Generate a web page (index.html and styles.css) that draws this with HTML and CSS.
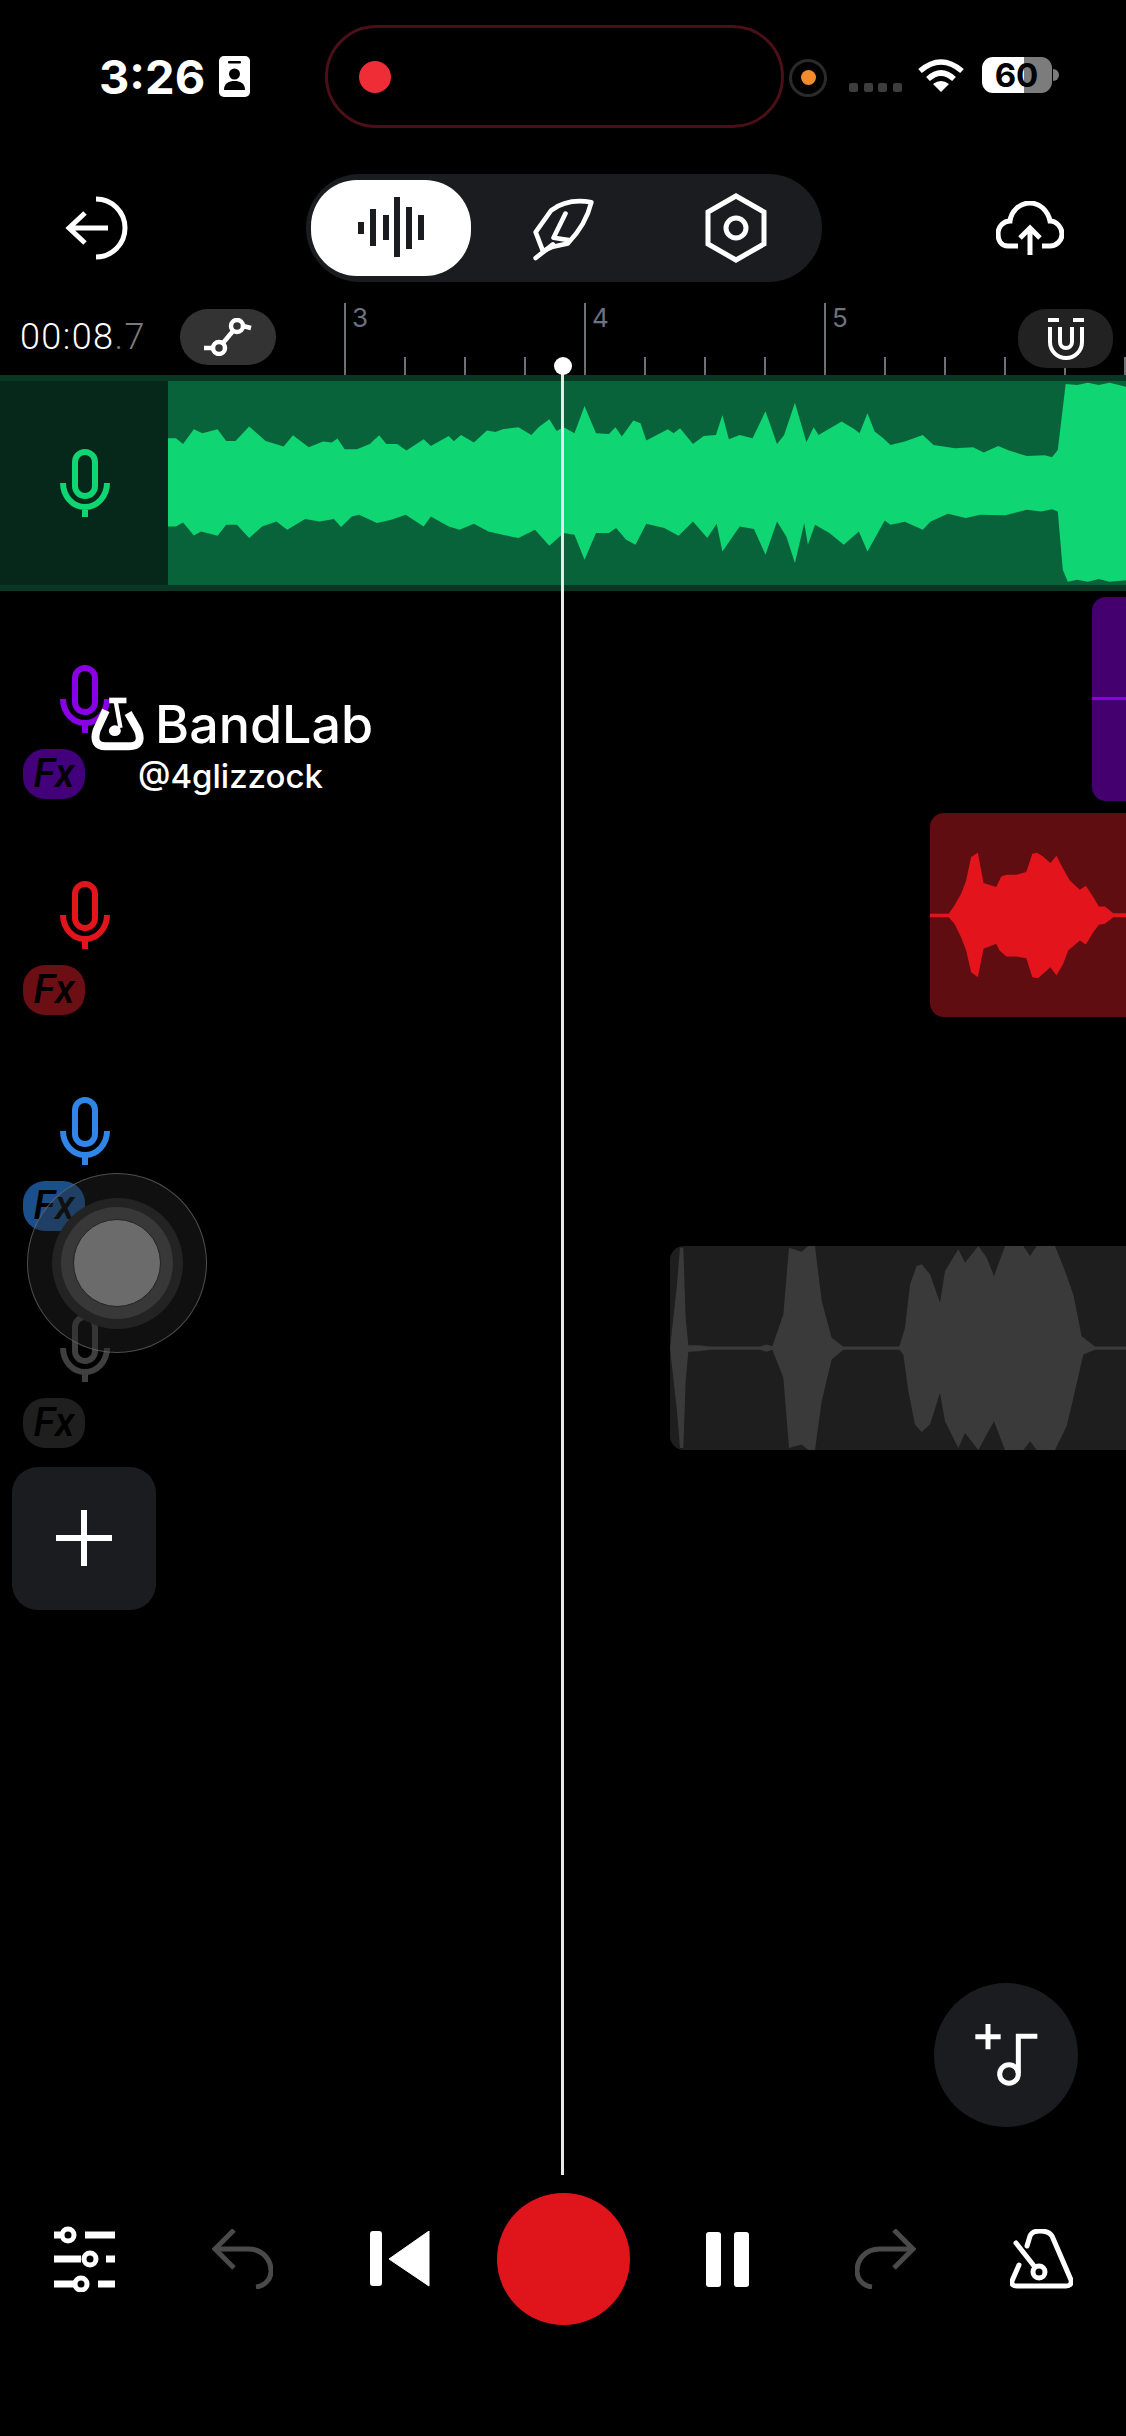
FILE: index.html
```html
<!DOCTYPE html>
<html lang="en">
<head>
  <meta charset="utf-8">
  <title>BandLab Studio</title>
  <link rel="stylesheet" href="styles.css">
</head>
<body>
  <!-- ios status bar -->
  <div class="status">
    <span class="clock">3:26</span>
    <svg class="badge" width="31" height="41" viewBox="0 0 31 41">
      <rect width="31" height="41" rx="5" fill="#fff"/>
      <rect x="9" y="5" width="13" height="2.5" rx="1" fill="#000"/>
      <circle cx="15.5" cy="18" r="5.5" fill="#000"/>
      <path d="M5 34c0-7 5-9 10.5-9S26 27 26 34z" fill="#000"/>
    </svg>
    <div class="island"><span class="rec-dot"></span></div>
    <div class="cam"><span></span></div>
    <div class="signal"><i></i><i></i><i></i><i></i></div>
    <svg class="wifi" width="48" height="34" viewBox="0 0 48 34" fill="none" stroke="#fff" stroke-width="5.5">
      <path d="M3 13Q24-5 45 13"/>
      <path d="M11 21Q24 9 37 21"/>
      <path d="M24 34L16 26Q24 20 32 26Z" fill="#fff" stroke="none"/>
    </svg>
    <div class="battery">60</div>
    <span class="nub"></span>
  </div>

  <!-- top nav -->
  <div class="nav">
    <svg class="back" width="64" height="66" viewBox="0 0 64 66" fill="none" stroke="#fff" stroke-width="5">
      <path d="M32 4A29 29 0 0 1 32 62"/>
      <path d="M4 33H44M21 18L5 33L21 48"/>
    </svg>
    <div class="modes">
      <div class="mode-on">
        <svg width="66" height="62" viewBox="0 0 66 62" fill="#1a1c20">
          <rect x="0" y="25" width="6" height="12"/>
          <rect x="12" y="12" width="6" height="37"/>
          <rect x="25" y="18" width="6" height="25"/>
          <rect x="36" y="0" width="6" height="60"/>
          <rect x="48" y="10" width="6" height="42"/>
          <rect x="60" y="18" width="6" height="25"/>
        </svg>
      </div>
      <svg class="feather" width="61" height="65" viewBox="1090 40 184 194" fill="none" stroke="#fff" stroke-width="14" stroke-linejoin="round" stroke-linecap="round">
        <path d="M1098 148L1145 82Q1195 45 1266 58Q1250 125 1195 182L1150 192L1120 205Z"/>
        <path d="M1188 92L1152 165L1198 172M1098 226L1150 185"/>
      </svg>
      <svg class="hex" width="62" height="70" viewBox="0 0 62 70" fill="none" stroke="#fff" stroke-width="5">
        <path d="M31 3L59 19V51L31 67L3 51V19Z"/>
        <circle cx="31" cy="35" r="10"/>
      </svg>
    </div>
    <svg class="cloud" width="68" height="54" viewBox="0 0 68 54" fill="none" stroke="#fff" stroke-width="5">
      <path d="M22 45H12C5 45 2 39 2 33C2 25 8 20 14 20C15 10 24 2 34 2C44 2 52 10 54 20C61 20 66 27 66 33C66 40 60 45 54 45H46"/>
      <path d="M34 54V28M24 37L34 27L44 37"/>
    </svg>
  </div>

  <!-- time + ruler -->
  <div class="timebar">
    <div class="ruler">
      <div class="bar">3</div>
      <div class="bar">4</div>
      <div class="bar">5</div>
    </div>
    <div class="timecode">00:08<span>.7</span></div>
    <div class="pill-btn auto-btn">
      <svg width="48" height="38" viewBox="0 0 48 38" fill="none" stroke="#fff" stroke-width="4.5">
        <circle cx="15" cy="30" r="6"/>
        <circle cx="33" cy="8" r="6"/>
        <path d="M0 30H9M19 25L29 13M39 8L47 10"/>
      </svg>
    </div>
    <div class="pill-btn magnet-btn">
      <svg width="38" height="42" viewBox="0 0 38 42" fill="none" stroke="#fff" stroke-width="4">
        <path d="M1 2H12M26 2H37"/>
        <path d="M3 9V24A16 16 0 0 0 35 24V9"/>
        <path d="M13 9V24A6 6 0 0 0 25 24V9"/>
      </svg>
    </div>
  </div>

  <!-- tracks -->
  <div class="tracks">
    <div class="track armed green">
      <div class="head">
        <svg class="mic" viewBox="0 0 50 68" fill="none" stroke="currentColor" stroke-width="6"><rect x="15" y="3" width="20" height="44" rx="10"/><path d="M3 34A22 24 0 0 0 47 34M25 58V68"/></svg>
      </div>
      <div class="lane">
        <div class="clip clip-green">
          <svg viewBox="234 33 1334 612" preserveAspectRatio="none">
            <path fill="#0fd673" d="M234 205L245 205 255 222 270 178 282 190 303 178 315 213 328 213 347 170 370 213 395 230 408 196 430 232 450 215 462 218 470 206 480 238 497 238 515 222 528 196 538 222 553 222 566 242 590 208 600 228 625 198 632 214 642 195 660 218 678 182 690 186 700 178 722 172 740 195 750 172 765 148 775 183 785 172 800 190 814 108 830 190 848 192 857 172 866 200 882 152 892 160 900 212 930 178 938 190 947 175 965 222 980 198 997 195 1006 135 1015 208 1030 195 1048 205 1066 124 1082 222 1092 195 1107 98 1123 217 1133 172 1140 195 1172 155 1190 178 1197 190 1208 130 1218 185 1230 205 1240 225 1260 215 1285 195 1300 225 1330 235 1355 232 1370 248 1390 228 1405 242 1430 258 1455 256 1465 262 1473 240 1484 42 1500 45 1515 38 1530 45 1545 38 1568 50 1568 632 1545 636 1530 628 1515 636 1500 630 1487 636 1480 600 1473 425 1465 418 1450 425 1430 420 1400 436 1365 435 1345 445 1320 432 1296 455 1285 480 1260 456 1240 465 1232 452 1208 545 1196 485 1175 525 1155 490 1135 465 1125 525 1120 460 1107 580 1095 500 1082 455 1066 555 1050 478 1030 470 1006 545 998 462 985 505 965 455 945 498 925 475 900 462 885 525 872 510 858 475 848 490 830 490 814 570 800 495 785 490 765 528 745 480 722 505 700 495 680 485 660 462 640 480 625 470 600 440 590 470 565 435 545 450 525 460 500 435 490 440 475 472 465 448 445 455 425 448 400 480 385 455 365 470 347 505 330 465 315 465 303 498 280 485 270 497 255 458 245 470 234 470Z"/>
          </svg>
        </div>
      </div>
    </div>

    <div class="track purple">
      <div class="head">
        <svg class="mic" viewBox="0 0 50 68" fill="none" stroke="currentColor" stroke-width="6"><rect x="15" y="3" width="20" height="44" rx="10"/><path d="M3 34A22 24 0 0 0 47 34M25 58V68"/></svg>
        <div class="fx">Fx</div>
      </div>
      <div class="lane">
        <div class="clip clip-purple"><span class="flat"></span></div>
      </div>
    </div>

    <div class="track red">
      <div class="head">
        <svg class="mic" viewBox="0 0 50 68" fill="none" stroke="currentColor" stroke-width="6"><rect x="15" y="3" width="20" height="44" rx="10"/><path d="M3 34A22 24 0 0 0 47 34M25 58V68"/></svg>
        <div class="fx">Fx</div>
      </div>
      <div class="lane">
        <div class="clip clip-red">
          <svg viewBox="92 68 586 612" preserveAspectRatio="none">
            <path fill="#e3141b" d="M92 370L148 370 165 345 185 310 200 270 215 200 235 187 245 240 252 278 290 290 305 258 320 253 350 253 380 245 398 190 412 187 430 198 452 218 470 196 490 235 510 270 540 298 558 286 580 320 597 348 615 348 640 368 678 368 678 380 640 380 615 400 597 403 580 425 558 462 540 450 505 480 490 520 470 555 452 530 415 563 398 560 380 503 350 498 320 498 300 480 290 460 252 475 235 560 215 545 200 480 185 440 165 400 148 380 92 380Z"/>
          </svg>
        </div>
      </div>
    </div>

    <div class="track blue">
      <div class="head">
        <svg class="mic" viewBox="0 0 50 68" fill="none" stroke="currentColor" stroke-width="6"><rect x="15" y="3" width="20" height="44" rx="10"/><path d="M3 34A22 24 0 0 0 47 34M25 58V68"/></svg>
        <div class="fx">Fx</div>
      </div>
      <div class="lane"></div>
    </div>

    <div class="track grey">
      <div class="head">
        <svg class="mic" viewBox="0 0 50 68" fill="none" stroke="currentColor" stroke-width="6"><rect x="15" y="3" width="20" height="44" rx="10"/><path d="M3 34A22 24 0 0 0 47 34M25 58V68"/></svg>
        <div class="fx">Fx</div>
      </div>
      <div class="lane">
        <div class="clip clip-grey">
          <svg viewBox="90 75 1368 612" preserveAspectRatio="none">
            <path fill="#3a3a3a" d="M90 381L110 200 120 80 130 80 137 290 145 372 175 372 210 376 360 376 380 370 397 375 430 280 447 80 485 92 505 75 525 75 545 240 575 350 610 376 778 376 795 320 810 190 830 135 845 130 870 160 900 245 915 150 955 85 975 125 1015 75 1040 110 1062 165 1095 75 1150 75 1170 105 1190 75 1245 75 1275 150 1300 220 1325 345 1365 376 1458 376 1458 386 1365 386 1330 400 1300 530 1280 615 1245 686 1190 686 1170 660 1150 686 1095 686 1062 600 1040 640 1015 686 975 635 955 680 915 600 900 515 870 610 845 632 825 610 805 510 790 400 778 386 610 386 575 415 545 540 525 686 505 686 485 670 447 680 430 470 397 386 380 392 360 386 210 386 175 390 145 392 137 480 130 680 120 680 110 560Z"/>
          </svg>
        </div>
      </div>
    </div>
  </div>

  <div class="add-track">
    <svg width="56" height="56" viewBox="0 0 56 56" fill="#fff"><rect x="25" width="6" height="56"/><rect y="25" width="56" height="6"/></svg>
  </div>

  <!-- transport -->
  <div class="transport">
    <svg class="t-mixer" width="61" height="66" viewBox="0 0 61 66" fill="none" stroke="#fff" stroke-width="7">
      <path d="M0 9H6M31 9H61M0 33H27M52 33H61M0 58H20M44 58H61"/>
      <circle cx="14" cy="9" r="6" stroke-width="5"/>
      <circle cx="36" cy="33" r="6" stroke-width="5"/>
      <circle cx="27" cy="58" r="6" stroke-width="5"/>
    </svg>
    <svg class="t-undo" width="61" height="60" viewBox="0 0 61 60" fill="none" stroke="#4a4a4a" stroke-width="5">
      <path d="M22 1L3 20L22 39"/>
      <path d="M3 20H36C52 20 59 32 59 42C59 50 53 57 44 58"/>
    </svg>
    <svg class="t-skip" width="60" height="56" viewBox="0 0 60 56" fill="#fff">
      <rect width="12" height="55" rx="3"/>
      <path d="M59 0V55L19 28Z" stroke="#fff" stroke-width="1" stroke-linejoin="round"/>
    </svg>
    <div class="record"></div>
    <div class="pause"><i></i><i></i></div>
    <svg class="t-redo" width="61" height="60" viewBox="0 0 61 60" fill="none" stroke="#4a4a4a" stroke-width="5">
      <path d="M39 1L58 20L39 39"/>
      <path d="M58 20H25C9 20 2 32 2 42C2 50 8 57 17 58"/>
    </svg>
    <svg class="t-metro" width="63" height="60" viewBox="0 0 63 60" fill="none" stroke="#fff" stroke-width="5" stroke-linecap="round">
      <path d="M9 36L2 52Q1 57 7 57H56Q62 57 61 51L42 7Q39 2 30 2Q22 2 20 7L17 17"/>
      <path d="M6 14L28 42"/>
      <circle cx="29" cy="43" r="6" fill="#000"/>
    </svg>
  </div>

  <!-- floating stuff on top of the timeline -->
  <div class="playhead"></div>

  <div class="watermark">
    <div class="wm-top">
      <svg width="55" height="55" viewBox="88 112 166 165" fill="none" stroke="#fff" stroke-width="24">
        <path d="M136 152L108 212Q94 260 135 260H205Q252 260 232 210L203 160"/>
        <path d="M146 122H198" stroke-width="17"/>
        <path d="M165 122L180 205" stroke-width="13"/>
        <ellipse cx="163" cy="213" rx="18" ry="16" fill="#fff" stroke="none"/>
      </svg>
      <span class="wm-name">BandLab</span>
    </div>
    <div class="wm-user">@4glizzock</div>
  </div>

  <div class="music-btn">
    <svg width="65" height="65" viewBox="190 155 195 195" fill="none" stroke="#fff" stroke-width="15">
      <path d="M194 196H270M232 158V234"/>
      <path d="M380 195H323V305"/>
      <circle cx="295" cy="308" r="28"/>
    </svg>
  </div>

  <div class="assistive"><div class="a-mid"><div class="a-in"><div class="a-knob"></div></div></div></div>
</body>
</html>
```

FILE: styles.css
```css
* {
  box-sizing: border-box;
}
body {
  margin: 0;
  width: 1126px;
  height: 2436px;
  background: #000;
  color: #fff;
  font-family: Inter, "Liberation Sans", sans-serif;
  display: flex;
  flex-direction: column;
  position: relative;
  overflow: hidden;
}
svg {
  display: block;
  flex: none;
}

/* status bar */
.status {
  display: flex;
  align-items: center;
  height: 103px;
  margin-top: 25px;
  padding-left: 99px;
}
.clock {
  font-size: 47px;
  font-weight: 700;
  line-height: 1;
  width: 108px;
}
.badge {
  margin-left: 12px;
}
.island {
  width: 459px;
  height: 103px;
  margin-left: 75px;
  border: 3px solid #4a0f17;
  border-radius: 52px;
  display: flex;
  align-items: center;
  padding-left: 31px;
}
.rec-dot {
  width: 32px;
  height: 32px;
  border-radius: 50%;
  background: #ee2d36;
}
.cam {
  width: 38px;
  height: 38px;
  margin-left: 5px;
  margin-top: 2px;
  border: 3px solid #2a2a2a;
  border-radius: 50%;
  display: flex;
  align-items: center;
  justify-content: center;
}
.cam span {
  width: 15px;
  height: 15px;
  border-radius: 50%;
  background: #f28a2e;
}
.signal {
  display: flex;
  gap: 5.5px;
  margin-left: 22px;
  margin-top: 22px;
}
.signal i {
  width: 9px;
  height: 9px;
  border-radius: 2px;
  background: #3d3d3d;
}
.wifi {
  margin-left: 15px;
  margin-top: -3px;
}
.battery {
  width: 70px;
  height: 36px;
  margin-left: 17px;
  margin-top: -3px;
  border-radius: 11px;
  background: linear-gradient(to right, #fff 60%, #7c7c7c 60%);
  color: #000;
  font-size: 33px;
  font-weight: 700;
  line-height: 36px;
  text-align: center;
}
.nub {
  width: 6px;
  height: 12px;
  margin-left: 1px;
  margin-top: -4px;
  border-radius: 0 6px 6px 0;
  background: #7c7c7c;
}

/* nav */
.nav {
  display: flex;
  align-items: center;
  height: 108px;
  margin-top: 46px;
  padding-left: 64px;
}
.modes {
  display: flex;
  align-items: center;
  width: 516px;
  height: 108px;
  margin-left: 178px;
  padding-left: 5px;
  background: #1a1c20;
  border-radius: 54px;
}
.mode-on {
  width: 160px;
  height: 96px;
  background: #fff;
  border-radius: 46px;
  display: flex;
  align-items: center;
  justify-content: center;
}
.feather {
  margin-left: 62px;
}
.hex {
  margin-left: 111px;
}
.cloud {
  margin-left: 174px;
  margin-top: -1px;
}

/* ruler row */
.timebar {
  display: flex;
  align-items: flex-start;
  height: 93px;
  padding-top: 27px;
  padding-left: 20px;
  position: relative;
}
.ruler {
  position: absolute;
  left: 344px;
  top: 21px;
  height: 72px;
  width: 782px;
  display: flex;
  background: linear-gradient(to right, #6b7079 2px, transparent 2px) left bottom / 60px 18px repeat-x;
}
.bar {
  width: 240px;
  height: 72px;
  flex: none;
  padding-left: 6px;
  border-left: 2px solid #6b7079;
  color: #6b7280;
  font-size: 26px;
  line-height: 30px;
}
.timecode {
  width: 160px;
  font-family: Roboto, sans-serif;
  font-weight: 300;
  font-size: 36px;
  letter-spacing: 1.4px;
  line-height: 56px;
  color: #fff;
  position: relative;
}
.timecode span {
  color: #7a7a7a;
}
.pill-btn {
  display: flex;
  align-items: center;
  justify-content: center;
  border-radius: 28px;
  position: relative;
}
.auto-btn {
  width: 96px;
  height: 56px;
  background: #333;
}
.magnet-btn {
  width: 95px;
  height: 59px;
  margin-left: auto;
  margin-right: 13px;
  background: #222;
}

/* tracks */
.track {
  display: flex;
  height: 216.3px;
}
.head {
  width: 168px;
  flex: none;
  padding-top: 74px;
  padding-left: 23px;
}
.lane {
  flex: 1;
  position: relative;
}
.mic {
  width: 50px;
  height: 68px;
  margin-left: 37px;
}
.fx {
  width: 62px;
  height: 50px;
  margin-top: 16px;
  border-radius: 22px;
  color: #000;
  font-family: Roboto, sans-serif;
  font-style: italic;
  font-weight: 500;
  font-size: 40px;
  line-height: 50px;
  text-align: center;
}
.clip {
  position: absolute;
  top: 6px;
  bottom: 6px;
  right: 0;
  border-radius: 14px 0 0 14px;
  overflow: hidden;
}
.clip svg {
  width: 100%;
  height: 100%;
}

.green {
  height: 215.7px;
  background: #0a3624;
  color: #0fd673;
}
.green .head {
  background: #06281a;
  margin: 6px 0;
  padding-top: 68px;
  padding-left: 60px;
}
.green .mic {
  margin-left: 0;
}
.clip-green {
  left: 0;
  background: #09633a;
  border-radius: 0;
}

.purple { color: #8a00e6; }
.purple .fx { background: #42007a; }
.clip-purple {
  left: 924px;
  background: #44006e;
  display: flex;
  align-items: center;
}
.flat {
  width: 100%;
  height: 3px;
  background: #8a00e0;
}

.red { color: #e3141b; }
.red .fx { background: #6b0f14; }
.clip-red {
  left: 762px;
  background: #600d12;
}

.blue { color: #2f86e8; }
.blue .fx { background: #1b4f8c; }

.grey { color: #3f3f3f; }
.grey .fx { background: #1f1f1f; }
.clip-grey {
  left: 502px;
  background: #1e1e1e;
}

.add-track {
  width: 144px;
  height: 143px;
  margin: 11px 0 0 12px;
  border-radius: 26px;
  background: #1a1c20;
  display: flex;
  align-items: center;
  justify-content: center;
}

/* transport */
.transport {
  display: flex;
  align-items: center;
  height: 132px;
  margin-top: auto;
  margin-bottom: 111px;
  padding-left: 54px;
}
.t-undo { margin-left: 97px; }
.t-skip { margin-left: 97px; }
.record {
  width: 133px;
  height: 132px;
  margin-left: 67px;
  border-radius: 50%;
  background: #e0151b;
}
.pause {
  display: flex;
  gap: 13px;
  margin-left: 76px;
}
.pause i {
  width: 15px;
  height: 55px;
  border-radius: 3px;
  background: #fff;
}
.t-redo { margin-left: 106px; }
.t-metro { margin-left: 94px; }

/* overlays */
.playhead {
  position: absolute;
  left: 561px;
  top: 366px;
  width: 3px;
  height: 1809px;
  background: #e8e8e8;
}
.playhead::before {
  content: "";
  position: absolute;
  left: -7.5px;
  top: -9px;
  width: 18px;
  height: 18px;
  border-radius: 50%;
  background: #fff;
}
.watermark {
  position: absolute;
  left: 90px;
  top: 697px;
}
.wm-top {
  display: flex;
  align-items: center;
  gap: 10px;
}
.wm-name {
  font-weight: 500;
  font-size: 52px;
  line-height: 55px;
}
.wm-user {
  margin-left: 48px;
  margin-top: 4px;
  font-weight: 500;
  font-size: 33px;
  line-height: 40px;
}
.music-btn {
  position: absolute;
  left: 934px;
  top: 1983px;
  width: 144px;
  height: 144px;
  border-radius: 50%;
  background: #1a1c20;
  display: flex;
  align-items: center;
  justify-content: center;
}
.assistive {
  position: absolute;
  left: 27px;
  top: 1173px;
  width: 180px;
  height: 180px;
  border-radius: 50%;
  background: rgba(40, 40, 40, .4);
  border: 1px solid rgba(120, 120, 120, .6);
  display: flex;
  align-items: center;
  justify-content: center;
}
.a-mid {
  width: 131px;
  height: 131px;
  border-radius: 50%;
  background: #232323;
  display: flex;
  align-items: center;
  justify-content: center;
}
.a-in {
  width: 112px;
  height: 112px;
  border-radius: 50%;
  background: #383838;
  display: flex;
  align-items: center;
  justify-content: center;
}
.a-knob {
  width: 88px;
  height: 88px;
  border-radius: 50%;
  background: #6b6b6b;
  border: 1px solid #222;
}
```
